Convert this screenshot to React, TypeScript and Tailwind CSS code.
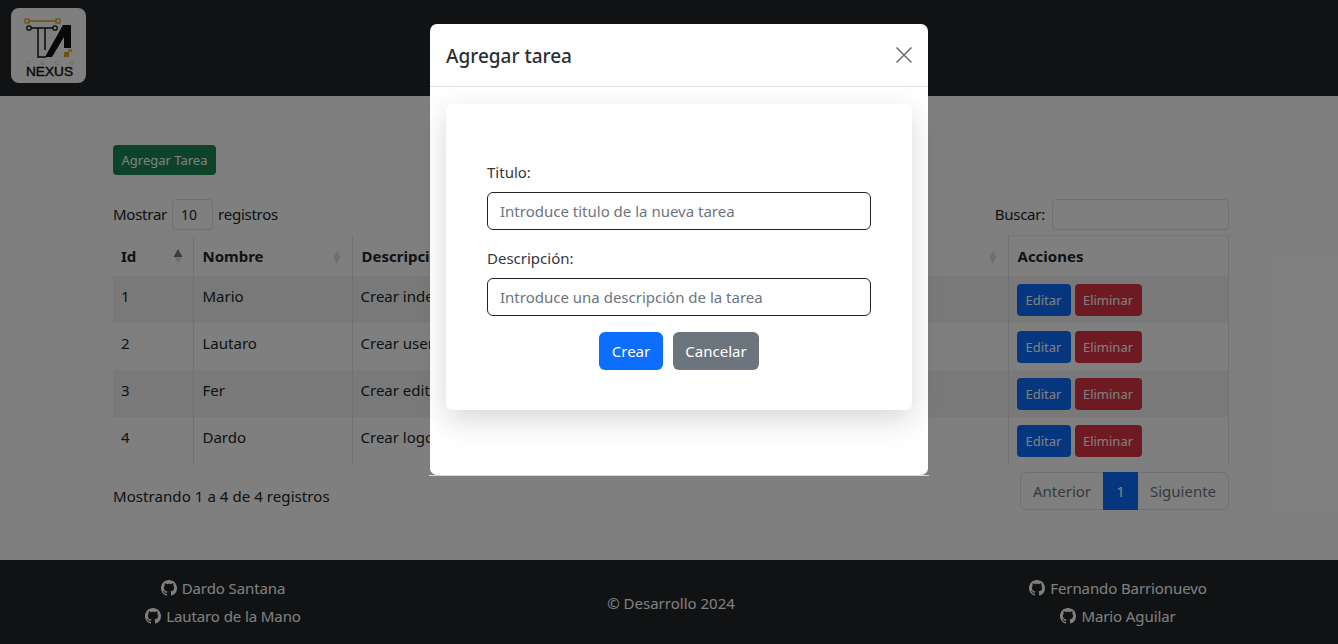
import { BsGithub } from 'react-icons/bs';

const rows = [
  { id: 1, nombre: 'Mario', descripcion: 'Crear index' },
  { id: 2, nombre: 'Lautaro', descripcion: 'Crear users' },
  { id: 3, nombre: 'Fer', descripcion: 'Crear editar' },
  { id: 4, nombre: 'Dardo', descripcion: 'Crear logo' },
];

const SortIcon = ({ active }: { active?: boolean }) => (
  <svg width="10" height="18" viewBox="0 0 10 18" className="absolute right-[10px] top-[12px]">
    {active ? (
      <path d="M5 1 L9.5 9 H0.5 Z" fill="#7a7a7a" />
    ) : (
      <path d="M5 3 L8.5 9 H1.5 Z" fill="#dcdcdc" />
    )}
    <path d="M5 16 L8.5 9 H1.5 Z" fill="#dcdcdc" />
  </svg>
);

const Logo = () => (
  <div className="w-[75px] h-[75px] rounded-[8px] bg-white overflow-hidden">
    <svg width="75" height="75" viewBox="0 0 75 75">
      <path d="M17 13 H46" stroke="#d9a520" strokeWidth="1.4" />
      <rect x="14" y="11" width="4" height="4" fill="none" stroke="#d9a520" strokeWidth="1.3" />
      <rect x="45" y="11" width="4" height="4" fill="none" stroke="#d9a520" strokeWidth="1.3" />
      <path d="M20 20 H42" stroke="#111" strokeWidth="1.4" />
      <circle cx="18" cy="20" r="2.2" fill="none" stroke="#111" strokeWidth="1.3" />
      <circle cx="44" cy="20" r="2.2" fill="none" stroke="#111" strokeWidth="1.3" />
      <path d="M27 20 V49 H35 M34 20 V42" stroke="#111" strokeWidth="1.5" fill="none" />
      <path d="M34 49 L52 17 H60 V40 H53 V29 L41 49 Z" fill="#111" />
      <rect x="53" y="44" width="5" height="5" fill="#d9a520" />
      <rect x="57" y="41" width="4" height="3" fill="#e2bd55" />
      <text x="16" y="57" fontSize="5" textLength="46" fill="#d8cb94" fontFamily="Liberation Sans, sans-serif">TECH</text>
      <text x="15" y="68" fontSize="12" textLength="47" lengthAdjust="spacingAndGlyphs" fill="#111" stroke="#111" strokeWidth="0.4" fontFamily="Liberation Sans, sans-serif">NEXUS</text>
    </svg>
  </div>
);

const GithubLink = ({ name }: { name: string }) => (
  <div className="flex items-center justify-center gap-[5px] h-[28px] text-white tracking-[-0.1px]">
    <BsGithub size={16} />
    <span>{name}</span>
  </div>
);

export default function App() {
  return (
    <div className="relative w-[1338px] h-[644px] overflow-hidden bg-white text-[#212529] text-[15px] font-['Noto_Sans',sans-serif]">
      <nav className="h-[96px] bg-[#212529] pl-[11px] pt-[8px]">
        <Logo />
      </nav>

      <main className="h-[464px] pl-[113px] pr-[109px] pt-[49px]">
        <button className="h-[30px] w-[103px] rounded-[4px] bg-[#198754] text-white text-[13px] pt-px">Agregar Tarea</button>

        <div className="flex items-center justify-between h-[31px] mt-[24px]">
          <div className="flex items-center">
            <span className="tracking-[-0.25px] mr-[5px]">Mostrar</span>
            <div className="w-[41px] h-[31px] border border-[#dee2e6] rounded-[4px] pl-[8px] text-[14px] leading-[29px]">10</div>
            <span className="tracking-[-0.25px] ml-[5px]">registros</span>
          </div>
          <div className="flex items-center gap-[7px]">
            <span className="tracking-[-0.25px]">Buscar:</span>
            <input className="w-[177px] h-[31px] border border-[#dee2e6] rounded-[4px]" />
          </div>
        </div>

        <table className="w-[1116px] mt-[5px] table-fixed border-collapse leading-[24px]">
          <thead>
            <tr className="h-[40px] font-bold">
              <th className="relative w-[80px] pl-[8px] text-left border-r border-[#dee2e6]">Id<SortIcon active /></th>
              <th className="relative w-[159px] pl-[9px] text-left border-x border-[#dee2e6]">Nombre<SortIcon /></th>
              <th className="relative w-[656px] pl-[9px] text-left border-x border-[#dee2e6]">Descripción<SortIcon /></th>
              <th className="pl-[9px] text-left border-x border-t border-x-[#dee2e6] border-t-[#eceef0]">Acciones</th>
            </tr>
          </thead>
          <tbody>
            {rows.map((row) => (
              <tr key={row.id} className={row.id % 2 === 1 ? 'h-[47px] bg-[#f2f2f2]' : 'h-[47px]'}>
                <td className="align-top pt-[8px] pl-[8px] border-r border-[#dee2e6]">{row.id}</td>
                <td className="align-top pt-[8px] pl-[9px] border-x border-[#dee2e6]">{row.nombre}</td>
                <td className="align-top pt-[8px] pl-[8px] border-x border-[#dee2e6]">{row.descripcion}</td>
                <td className="align-top pt-[8px] pl-[8px] border-x border-[#dee2e6]">
                  <div className="flex gap-[4px] text-[13px] text-white">
                    <button className="h-[32px] w-[54px] rounded-[4px] bg-[#0d6efd] pt-px">Editar</button>
                    <button className="h-[32px] w-[67px] rounded-[4px] bg-[#dc3545] pt-px">Eliminar</button>
                  </div>
                </td>
              </tr>
            ))}
          </tbody>
        </table>

        <div className="flex items-start justify-between mt-[8px]">
          <span className="mt-[12px] leading-[24px] tracking-[0.07px]">Mostrando 1 a 4 de 4 registros</span>
          <div className="flex h-[38px] text-[#6c757d] rounded-[6px] border border-[#dee2e6] leading-[36px] text-center">
            <span className="w-[82px]">Anterior</span>
            <span className="w-[35px] -my-px h-[38px] leading-[38px] bg-[#0d6efd] text-white">1</span>
            <span className="w-[90px]">Siguiente</span>
          </div>
        </div>
      </main>

      <footer className="h-[84px] bg-[#212529] grid grid-cols-[446px_450px_442px] items-center text-center text-white">
        <div>
          <GithubLink name="Dardo Santana" />
          <GithubLink name="Lautaro de la Mano" />
        </div>
        <div className="pt-[3px]">© Desarrollo 2024</div>
        <div className="pl-[2px]">
          <GithubLink name="Fernando Barrionuevo" />
          <GithubLink name="Mario Aguilar" />
        </div>
      </footer>

      {/* backdrop + modal sit over the page */}
      <div className="absolute inset-0 bg-black/50" />
      <div className="absolute left-[429px] top-[475px] w-[500px] h-px bg-[#d8d8d8]" />
      <div className="absolute left-[430px] top-[24px] w-[498px] h-[451px] bg-white rounded-[7px] flex flex-col">
        <div className="h-[63px] flex items-center justify-between px-[16px] border-b border-[#dee2e6]">
          <h2 className="text-[19px] font-medium text-[#2b2f33] pt-[2px]">Agregar tarea</h2>
          <svg width="16" height="16" viewBox="0 0 16 16" className="-mt-[1px]">
            <path d="M0.5 0.5 L15.5 15.5 M15.5 0.5 L0.5 15.5" stroke="#6a6a6a" strokeWidth="1.5" fill="none" />
          </svg>
        </div>
        <div className="mx-[16px] mt-[17px] h-[306px] rounded-[6px] bg-white shadow-[0_10px_30px_rgba(0,0,0,0.16)] px-[41px] pt-[57px] text-[#33383d]">
          <label className="block leading-[22px]">Titulo:</label>
          <input
            placeholder="Introduce titulo de la nueva tarea"
            className="block w-full mt-[9px] h-[38px] border border-[#212529] rounded-[6px] px-[12px] placeholder:text-[#6c757d]"
          />
          <label className="block leading-[22px] mt-[17px]">Descripción:</label>
          <input
            placeholder="Introduce una descripción de la tarea"
            className="block w-full mt-[9px] h-[38px] border border-[#212529] rounded-[6px] px-[12px] placeholder:text-[#6c757d]"
          />
          <div className="flex justify-center gap-[10px] mt-[16px] text-white">
            <button className="h-[38px] w-[64px] rounded-[6px] bg-[#0d6efd]">Crear</button>
            <button className="h-[38px] w-[86px] rounded-[6px] bg-[#6c757d]">Cancelar</button>
          </div>
        </div>
      </div>
    </div>
  );
}
